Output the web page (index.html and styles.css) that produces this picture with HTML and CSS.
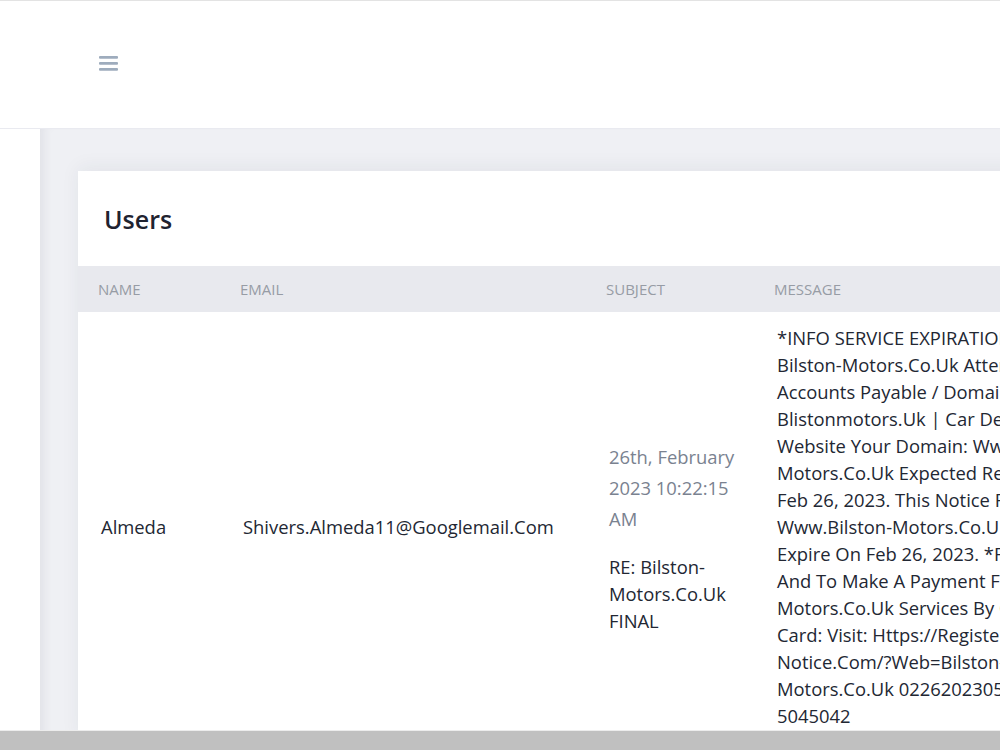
FILE: index.html
```html
<!DOCTYPE html>
<html lang="en">
<head>
  <meta charset="UTF-8">
  <title>Users</title>
  <link rel="stylesheet" href="styles.css">
</head>
<body>
  <header class="topbar">
    <button class="menu-toggle" aria-label="Menu">
      <svg width="19" height="15" viewBox="0 0 19 15">
        <rect x="0" y="0" width="19" height="2.7" rx="1"/>
        <rect x="0" y="6" width="19" height="2.7" rx="1"/>
        <rect x="0" y="12" width="19" height="2.7" rx="1"/>
      </svg>
    </button>
  </header>

  <div class="layout">
    <aside class="sidebar"></aside>

    <main class="content">
      <section class="card">
        <div class="card-header">
          <h2>Users</h2>
        </div>

        <table class="users-table">
          <colgroup>
            <col class="col-name">
            <col class="col-email">
            <col class="col-subject">
            <col class="col-message">
          </colgroup>
          <thead>
            <tr>
              <th>Name</th>
              <th>Email</th>
              <th>Subject</th>
              <th>Message</th>
            </tr>
          </thead>
          <tbody>
            <tr>
              <td>Almeda</td>
              <td>Shivers.Almeda11@Googlemail.Com</td>
              <td class="subject-cell">
                <p class="date">26th, February 2023 10:22:15 AM</p>
                <p class="subject">RE: Bilston-Motors.Co.Uk FINAL</p>
              </td>
              <td class="message">
                *INFO SERVICE EXPIRATION*<br>
                Bilston-Motors.Co.Uk Attention:<br>
                Accounts Payable / Domain Owner<br>
                Blistonmotors.Uk | Car Dealership<br>
                Website Your Domain: Www.Bilston-<br>
                Motors.Co.Uk Expected Renewal Date:<br>
                Feb 26, 2023. This Notice For:<br>
                Www.Bilston-Motors.Co.Uk Will<br>
                Expire On Feb 26, 2023. *For Details<br>
                And To Make A Payment For Bilston-<br>
                Motors.Co.Uk Services By Credit<br>
                Card: Visit: Https://Register-<br>
                Notice.Com/?Web=Bilston-<br>
                Motors.Co.Uk 0226202305<br>
                5045042
              </td>
            </tr>
          </tbody>
        </table>
      </section>
    </main>
  </div>

  <div class="scrollbar"></div>
</body>
</html>
```

FILE: styles.css
```css
html, body {
  margin: 0;
  overflow: hidden;
}

body {
  font-family: "Open Sans", "DejaVu Sans", sans-serif;
  color: #222733;
  background: #fff;
}

.topbar {
  height: 127px;
  border-top: 1px solid #e3e3e3;
  border-bottom: 1px solid #e9eaf0;
  display: flex;
  align-items: center;
  padding-left: 99px;
  background: #fff;
}

.menu-toggle {
  background: none;
  border: none;
  padding: 0;
  margin-bottom: 2px;
  display: flex;
  cursor: pointer;
}

.menu-toggle svg {
  fill: #9eacbd;
}

.layout {
  display: flex;
  min-height: 640px;
}

.sidebar {
  width: 40px;
  flex-shrink: 0;
  background: #fff;
}

.content {
  flex: 1;
  padding: 42px 0 0 38px;
  background: #eff0f4;
  box-shadow: inset 10px 0 10px -6px rgba(40, 45, 70, 0.07);
}

.card {
  width: 1100px;
  background: #fff;
  box-shadow: 0 -4px 18px rgba(40, 45, 70, 0.06);
}

.card-header {
  height: 95px;
  display: flex;
  align-items: center;
  padding: 0 26px;
}

.card-header h2 {
  margin: 0;
  font-size: 25px;
  font-weight: 600;
  color: #1f2330;
}

.users-table {
  width: 100%;
  border-collapse: collapse;
  table-layout: fixed;
}

.col-name { width: 142px; }
.col-email { width: 366px; }
.col-subject { width: 168px; }

.users-table th {
  height: 46px;
  padding: 0 20px;
  background: #e8e9ee;
  color: #979ca5;
  font-size: 15px;
  font-weight: 400;
  text-align: left;
  text-transform: uppercase;
}

.users-table td {
  padding: 12px 8px 12px 23px;
  font-size: 18.4px;
  line-height: 27px;
  vertical-align: middle;
}

.users-table td.subject-cell {
  padding-top: 33px;
}

.users-table p {
  margin: 0;
}

.date {
  color: #7a8290;
  line-height: 31px;
  margin-bottom: 19px !important;
}

.message {
  white-space: nowrap;
}

.scrollbar {
  position: fixed;
  left: 0;
  right: 0;
  bottom: 0;
  height: 19px;
  background: #c0c0c0;
  border-top: 1px solid #ececec;
}
```
